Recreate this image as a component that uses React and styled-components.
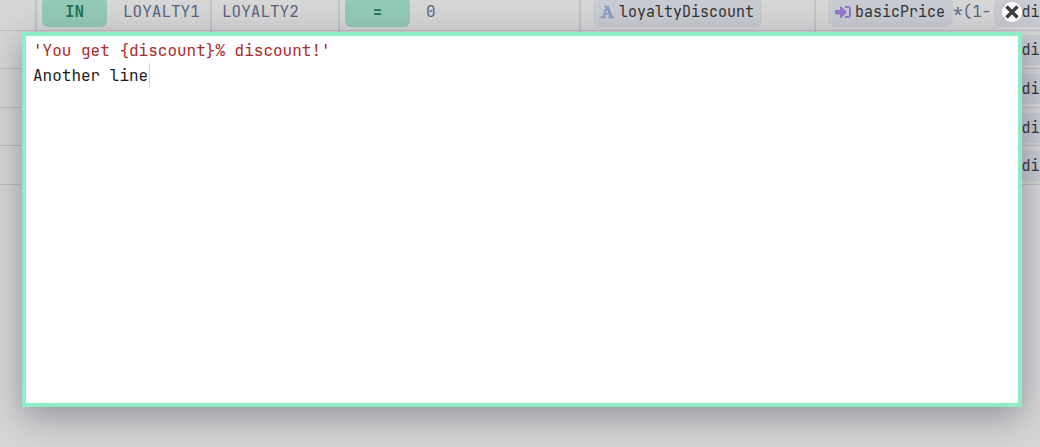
import React, { useState } from 'react';
import styled, { createGlobalStyle } from 'styled-components';
import { FaSignInAlt, FaVectorSquare } from 'react-icons/fa';

const otherRows = [2, 3, 4, 5];

const StringIcon = () => (
    <svg width="15" height="14" viewBox="0 0 15 14" fill="none" stroke="currentColor">
        <path strokeWidth="1.8" d="M0.5 12.4H5.6M8.4 12.4H14.2M4.4 1.6H8.4M4.4 8.9H10" />
        <path strokeWidth="1.9" d="M3 12.4 7 1.6" />
        <path strokeWidth="2.8" d="M7.4 1.8 11.4 12.2" />
    </svg>
);

const Formula = () => (
    <Line>
        <Chip><ChipIcon $color="#9279c8"><FaSignInAlt size={16} /></ChipIcon>basicPrice</Chip>
        *(1-
        <Chip $spaced><ChipIcon $color="#c79a2e" $width={16}><FaVectorSquare size={14} /></ChipIcon>discount</Chip>
        )
    </Line>
);

const App = () => {
    const [text, setText] = useState("'You get {discount}% discount!'\nAnother line");

    // quoted strings are shown in red
    const parts = text.split(/('[^'\n]*')/);

    return (
        <Page>
            <GlobalStyle />
            <Sheet>
                <colgroup>
                    <Col $width={37} />
                    <Col $width={175} />
                    <Col $width={128} />
                    <Col $width={241} />
                    <Col $width={235} />
                    <col />
                </colgroup>
                <tbody>
                    <tr>
                        <Cell />
                        <Cell $pad={5}><Line><Operator>IN</Operator>LOYALTY1</Line></Cell>
                        <Cell $pad={10}>LOYALTY2</Cell>
                        <Cell $pad={5}><Line><Operator>=</Operator>0</Line></Cell>
                        <Cell $pad={12}>
                            <Line>
                                <Chip><ChipIcon $color="#869fc2"><StringIcon /></ChipIcon>loyaltyDiscount</Chip>
                            </Line>
                        </Cell>
                        <Cell $pad={12}><Formula /></Cell>
                    </tr>
                    {otherRows.map((it) => (
                        <tr key={it}>
                            <Cell /><Cell /><Cell /><Cell /><Cell />
                            <Cell $pad={12}><Formula /></Cell>
                        </tr>
                    ))}
                </tbody>
            </Sheet>

            <Popup role="dialog" aria-label="Edit expression">
                <CloseButton type="button" aria-label="Close">
                    <svg width="14" height="14" viewBox="0 0 14 14" fill="none" stroke="#3c3c3c" strokeWidth="3.4">
                        <path d="M1.5 1.5 12.5 12.5M12.5 1.5 1.5 12.5" />
                    </svg>
                </CloseButton>
                <Editor>
                    <Highlight aria-hidden="true">
                        {parts.map((part, i) => (i % 2 ? <Str key={i}>{part}</Str> : part))}
                        <Cursor />
                    </Highlight>
                    <Input
                        aria-label="Expression"
                        spellCheck={false}
                        value={text}
                        onChange={(e) => setText(e.target.value)}
                    />
                </Editor>
            </Popup>
        </Page>
    );
};

export default App;


const mono = '"JetBrains Mono", "DejaVu Sans Mono", "Liberation Mono", monospace';

const GlobalStyle = createGlobalStyle`
    * { box-sizing: border-box; }
    body { margin: 0; background: #d6d6d6; }
`

const Page = styled.div`
    min-height: 100vh; overflow: hidden;
    font: 16px/24px ${mono};
    color: #5a6480;
`

/* scrolled a little, so the first row is cut by the top edge */
const Sheet = styled.table`
    width: 100%; height: 193px; margin-top: -8px;
    table-layout: fixed; border-collapse: separate; border-spacing: 0;
`

const Col = styled.col`
    width: ${(p) => p.$width}px;
`

const Cell = styled.td`
    padding: 2px 0 0 ${(p) => p.$pad || 0}px;
    border-right: 2px solid #bfc2c8;
    border-bottom: 1px solid #bcbcc2;
    overflow: hidden; white-space: nowrap;
    &:last-child { border-right: 0; }
`

const Line = styled.div`
    display: flex; align-items: center;
`

const Operator = styled.span`
    flex: none; width: 65px; height: 30px; margin-right: 16px;
    border-radius: 6px; background: #94c9b7; color: #1c7556;
    font-weight: bold; line-height: 30px; text-align: center;
`

const Chip = styled.span`
    flex: none; display: flex; align-items: center; gap: 4px;
    height: 30px; padding: 0 8px 0 7px; margin-left: ${(p) => (p.$spaced ? 3 : 0)}px;
    border-radius: 8px; background: #c8cbd1; color: #343434;
    font-size: 15px;
`

const ChipIcon = styled.span`
    display: flex; justify-content: flex-end;
    width: ${(p) => (p.$width ? `${p.$width}px` : 'auto')};
    color: ${(p) => p.$color};
`

const Popup = styled.div`
    position: fixed; top: 32px; right: 18px; bottom: 40px; left: 22px;
    display: flex;
    box-shadow: 0 10px 32px rgba(40, 36, 64, 0.38);
`

const CloseButton = styled.button`
    position: absolute; top: -30px; right: 0;
    display: flex; align-items: center; justify-content: center;
    width: 20px; height: 20px; padding: 0;
    border: 0; border-radius: 50%; background: #fff; cursor: pointer;
`

const Editor = styled.div`
    flex: 1; display: grid;
    border: 4px solid #8eedc7; background: #fff; color: #1c1c1c;
    font: 16px/25px ${mono};
    box-shadow: inset 0 0 0 1px #f4fffa;
`

const Highlight = styled.pre`
    grid-area: 1 / 1; margin: 0; padding: 2px 7px;
    font: inherit; white-space: pre-wrap; overflow-wrap: break-word;
`

const Str = styled.span`
    color: #ab2a2a;
`

const Cursor = styled.span`
    display: inline-block; width: 1px; height: 25px; margin-left: 1px;
    background: #d2d2d2; vertical-align: top;
`

const Input = styled.textarea`
    grid-area: 1 / 1; padding: 2px 7px; border: 0; outline: 0; resize: none;
    background: transparent; color: transparent; caret-color: #1c1c1c;
    font: inherit;
`
